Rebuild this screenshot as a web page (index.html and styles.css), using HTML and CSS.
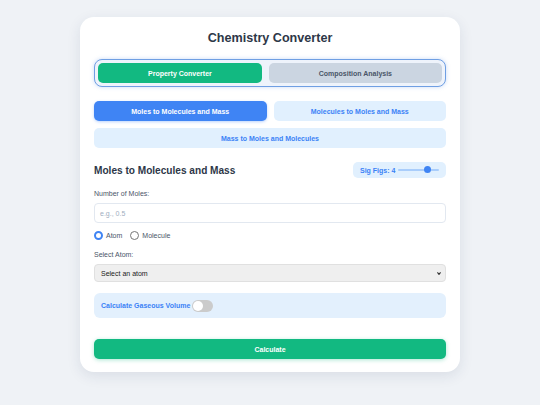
FILE: index.html
```html
<!DOCTYPE html>
<html>
<head>
<meta charset="utf-8">
<link rel="stylesheet" href="styles.css">
</head>
<body>
<div class="card">
  <h1 class="title">Chemistry Converter</h1>
  <div class="tabs">
    <div class="tab tab-active">Property Converter</div>
    <div class="tab tab-idle">Composition Analysis</div>
  </div>
  <div class="modes">
    <div class="mode mode-active">Moles to Molecules and Mass</div>
    <div class="mode">Molecules to Moles and Mass</div>
    <div class="mode mode-wide">Mass to Moles and Molecules</div>
  </div>
  <div class="head-row">
    <h2 class="heading">Moles to Molecules and Mass</h2>
    <div class="sig">
      <span class="sig-label">Sig Figs: 4</span>
      <span class="slider"><span class="thumb"></span></span>
    </div>
  </div>
  <div class="label label-first">Number of Moles:</div>
  <div class="input"><span class="placeholder">e.g., 0.5</span></div>
  <div class="radios">
    <span class="radio radio-on"></span><span class="radio-text">Atom</span>
    <span class="radio"></span><span class="radio-text">Molecule</span>
  </div>
  <div class="label label-second">Select Atom:</div>
  <div class="select"><span>Select an atom</span>
    <svg class="chev" width="4" height="3" viewBox="0 0 4 3"><path d="M0.4 0.4 L2 2.4 L3.6 0.4" fill="none" stroke="#333" stroke-width="1.1"/></svg>
  </div>
  <div class="gas">
    <span class="gas-text">Calculate Gaseous Volume</span>
    <span class="toggle"><span class="knob"></span></span>
  </div>
  <div class="calc">Calculate</div>
</div>
</body>
</html>
```
FILE: styles.css
```css
html, body {
  margin: 0;
  padding: 0;
  background: #eff2f6;
  font-family: "Liberation Sans", Arial, sans-serif;
}
body {
  padding-top: 17px;
  height: 405px;
  box-sizing: border-box;
}
.card {
  width: 380px;
  margin: 0 auto;
  box-sizing: border-box;
  padding: 12px 14px 13px 14px;
  background: #fff;
  border-radius: 14px;
  box-shadow: 0 4px 14px rgba(30, 50, 90, 0.10);
  display: flex;
  flex-direction: column;
}
.title {
  margin: 0;
  font-size: 12.6px;
  line-height: 18px;
  text-align: center;
  font-weight: bold;
  color: #2d3748;
}
.tabs {
  margin-top: 12px;
  height: 28px;
  box-sizing: border-box;
  border: 1px solid #6f9fe3;
  border-radius: 8px;
  background: #eef3fb;
  padding: 3px;
  display: flex;
  gap: 7px;
  box-shadow: 0 0 4px rgba(100, 150, 230, 0.35);
}
.tab {
  flex: 1 1 auto;
  height: 20px;
  border-radius: 5px;
  font-size: 7px;
  font-weight: bold;
  display: flex;
  align-items: center;
  justify-content: center;
}
.tab-active {
  background: #12b981;
  color: #fff;
}
.tab-idle {
  background: #cbd5e1;
  color: #4a5568;
}
.modes {
  margin-top: 14px;
  display: grid;
  grid-template-columns: 1fr 1fr;
  gap: 7px;
}
.mode {
  height: 20px;
  border-radius: 5px;
  background: #e1f0fe;
  color: #3b82f6;
  font-size: 7px;
  font-weight: bold;
  display: flex;
  align-items: center;
  justify-content: center;
}
.mode-active {
  background: #3f84f4;
  color: #fff;
  box-shadow: 0 1px 3px rgba(59, 130, 246, 0.35);
}
.mode-wide {
  grid-column: 1 / 3;
}
.head-row {
  margin-top: 14px;
  height: 16px;
  display: flex;
  align-items: center;
  justify-content: space-between;
}
.heading {
  margin: 0;
  font-size: 10.1px;
  font-weight: bold;
  color: #2d3748;
}
.sig {
  width: 93px;
  height: 16px;
  box-sizing: border-box;
  border-radius: 5px;
  background: #e1f0fe;
  padding: 0 7px;
  display: flex;
  align-items: center;
  justify-content: space-between;
}
.sig-label {
  font-size: 7px;
  font-weight: bold;
  color: #3b82f6;
}
.slider {
  width: 41px;
  height: 2px;
  background: #a9cdfb;
  border-radius: 1px;
  position: relative;
}
.thumb {
  position: absolute;
  left: 26px;
  top: -3px;
  width: 7px;
  height: 7px;
  border-radius: 50%;
  background: #3f84f4;
}
.label {
  font-size: 7px;
  line-height: 10px;
  color: #4a5568;
}
.label-first {
  margin-top: 11px;
}
.label-second {
  margin-top: 9px;
}
.input {
  margin-top: 4px;
  height: 20px;
  box-sizing: border-box;
  border: 1px solid #e2e8f0;
  border-radius: 4px;
  padding: 0 5px;
  display: flex;
  align-items: center;
}
.placeholder {
  font-size: 7px;
  color: #a0aec0;
}
.radios {
  margin-top: 6px;
  height: 12px;
  display: flex;
  align-items: center;
}
.radio {
  width: 9px;
  height: 9px;
  box-sizing: border-box;
  border-radius: 50%;
  border: 1px solid #767676;
  background: #fff;
}
.radio-on {
  border: 2.5px solid #3f84f4;
}
.radio-text {
  font-size: 7px;
  color: #4a5568;
  margin-left: 3px;
  margin-right: 8px;
}
.select {
  margin-top: 4px;
  height: 18px;
  box-sizing: border-box;
  border: 1px solid #e0e0e0;
  border-radius: 4px;
  background: #efefef;
  padding: 0 4px 0 6px;
  display: flex;
  align-items: center;
  justify-content: space-between;
  font-size: 7px;
  color: #1a1a1a;
}
.gas {
  margin-top: 11px;
  height: 25px;
  box-sizing: border-box;
  border-radius: 6px;
  background: #e3f0fd;
  padding: 0 7px;
  display: flex;
  align-items: center;
  gap: 2px;
}
.gas-text {
  font-size: 7px;
  font-weight: bold;
  color: #3b82f6;
}
.toggle {
  width: 21px;
  height: 12px;
  border-radius: 6px;
  background: #cbcbcb;
  display: flex;
  align-items: center;
  padding: 0 1px;
  box-sizing: border-box;
}
.knob {
  width: 10px;
  height: 10px;
  border-radius: 50%;
  background: #fff;
}
.calc {
  margin-top: 21px;
  height: 20px;
  border-radius: 5px;
  background: #12b981;
  color: #fff;
  font-size: 7px;
  font-weight: bold;
  display: flex;
  align-items: center;
  justify-content: center;
  box-shadow: 0 1px 4px rgba(16, 185, 129, 0.35);
}
```
